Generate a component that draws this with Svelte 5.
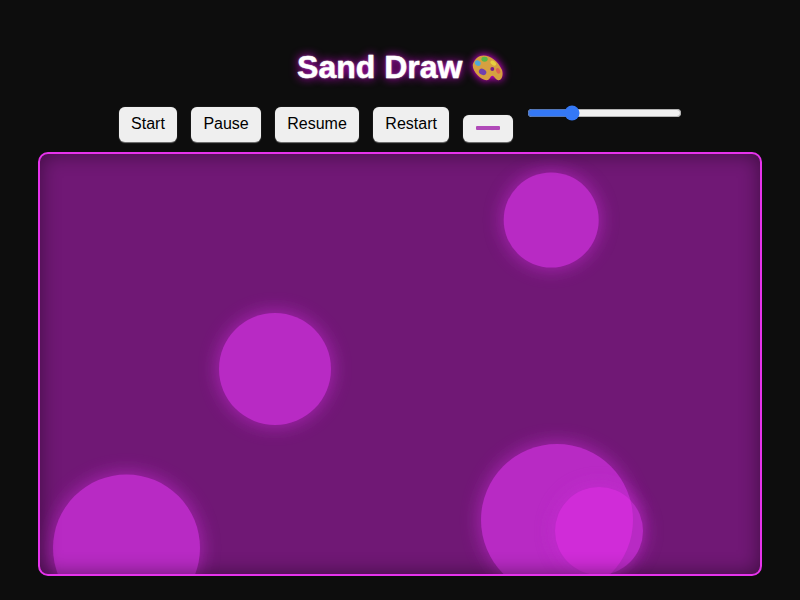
<script lang="ts">
  let speed = $state(27);
  let color = $state("#b04ab8");

  const buttons = ["Start", "Pause", "Resume", "Restart"];

  // blobs in canvas coordinates (720x420 inside the border)
  const blobs = [
    { x: 511.2, y: 66, r: 47.5 },
    { x: 235, y: 215, r: 56 },
    { x: 86.5, y: 394, r: 73.5 },
    { x: 517, y: 366, r: 76 },
    { x: 559, y: 377, r: 44 },
  ];
</script>

<main class="page">
  <h1 class="title">
    Sand Draw
    <svg class="palette" width="33" height="30" viewBox="0 0 34 30" aria-hidden="true">
      <path d="M3 11C5 5 9 2 14 2C21 2 29 8 33 17C34.500 22 33 28 29 27.500C26 27 25 23 23 23C20.500 23 21 27.500 17 27.500C11 27.500 1.500 18 3 11z" fill="#d6a040" />
      <ellipse cx="8" cy="10" rx="3.200" ry="2.600" transform="rotate(35 8 10)" fill="#50a8d8" />
      <ellipse cx="15" cy="6" rx="3.200" ry="2.500" fill="#58b848" />
      <ellipse cx="24" cy="10" rx="3.200" ry="2" transform="rotate(35 24 10)" fill="#e8d040" />
      <ellipse cx="13" cy="19" rx="4" ry="3" transform="rotate(25 13 19)" fill="#7040b0" />
      <circle cx="23" cy="16" r="2" fill="#7a1f8a" />
      <ellipse cx="29" cy="18" rx="2" ry="3" transform="rotate(-25 29 18)" fill="#e06050" />
    </svg>
  </h1>

  <div class="controls">
    {#each buttons as label}
      <button class="btn">{label}</button>
    {/each}
    <input class="swatch" type="color" bind:value={color} />
    <input class="speed" type="range" min="0" max="100" bind:value={speed} />
  </div>

  <div class="canvas">
    <svg width="720" height="420" viewBox="0 0 720 420" aria-hidden="true">
      <defs>
        <filter id="glow" x="-40%" y="-40%" width="180%" height="180%">
          <feGaussianBlur stdDeviation="9" />
        </filter>
        <clipPath id="big">
          <circle cx={blobs[3].x} cy={blobs[3].y} r={blobs[3].r} />
        </clipPath>
      </defs>
      {#each blobs as b}
        <circle cx={b.x} cy={b.y} r={b.r + 2} fill="#c82cd4" opacity="0.6" filter="url(#glow)" />
        <circle cx={b.x} cy={b.y} r={b.r} fill="#b82ac4" />
      {/each}
      <circle cx={blobs[4].x} cy={blobs[4].y} r={blobs[4].r} fill="#d02cd8" clip-path="url(#big)" />
    </svg>
  </div>
</main>

<style>
  :global(body) {
    margin: 0;
    background: #0d0d0d;
  }

  .page {
    height: 600px;
    overflow: hidden;
    padding-top: 49px;
    box-sizing: border-box;
    text-align: center;
    font-family: "Liberation Sans", Arial, sans-serif;
  }

  .title {
    margin: 0 0 21px;
    font-size: 32px;
    font-weight: 700;
    color: #fff;
    -webkit-text-stroke: 0.4px #fff;
    text-shadow: 0 0 2px rgba(255, 255, 255, 0.6), 0 0 10px #e000e8;
  }

  .palette {
    margin-left: -1.500px;
    vertical-align: -5px;
    filter: drop-shadow(0 0 4px #f0f);
  }

  .controls {
    display: flex;
    justify-content: center;
    align-items: flex-start;
    gap: 14.5px;
    height: 45px;
    padding-left: 1px;
  }

  .btn {
    padding: 8px 12px;
    height: 34.500px;
    border: none;
    border-radius: 6px;
    background: #efefef;
    box-shadow: 0 0.5px 1px #777;
    color: #000;
    font-family: inherit;
    font-size: 16px;
  }

  .swatch {
    margin-top: 7.500px;
    width: 50px;
    height: 27px;
    box-sizing: border-box;
    padding: 11.500px 13px;
    border: none;
    border-radius: 6px;
    background: #efefef;
    box-shadow: 0 0.5px 1px #777;
  }

  .swatch::-webkit-color-swatch-wrapper {
    padding: 0;
  }

  .swatch::-webkit-color-swatch {
    border: none;
    border-radius: 1px;
  }

  .speed {
    margin: -2px 0 0 -1px;
    width: 155px;
    accent-color: #3478f6;
  }

  .canvas {
    display: block;
    width: 720px;
    height: 420px;
    margin: 0 auto;
    border: 2px solid #e633ec;
    border-radius: 10px;
    background: #701875;
    overflow: hidden;
    position: relative;
  }

  .canvas svg {
    display: block;
  }

  .canvas::after {
    content: "";
    position: absolute;
    inset: 0;
    border-radius: 8px;
    box-shadow: inset 0 0 20px rgba(0, 0, 0, 0.45);
  }
</style>
